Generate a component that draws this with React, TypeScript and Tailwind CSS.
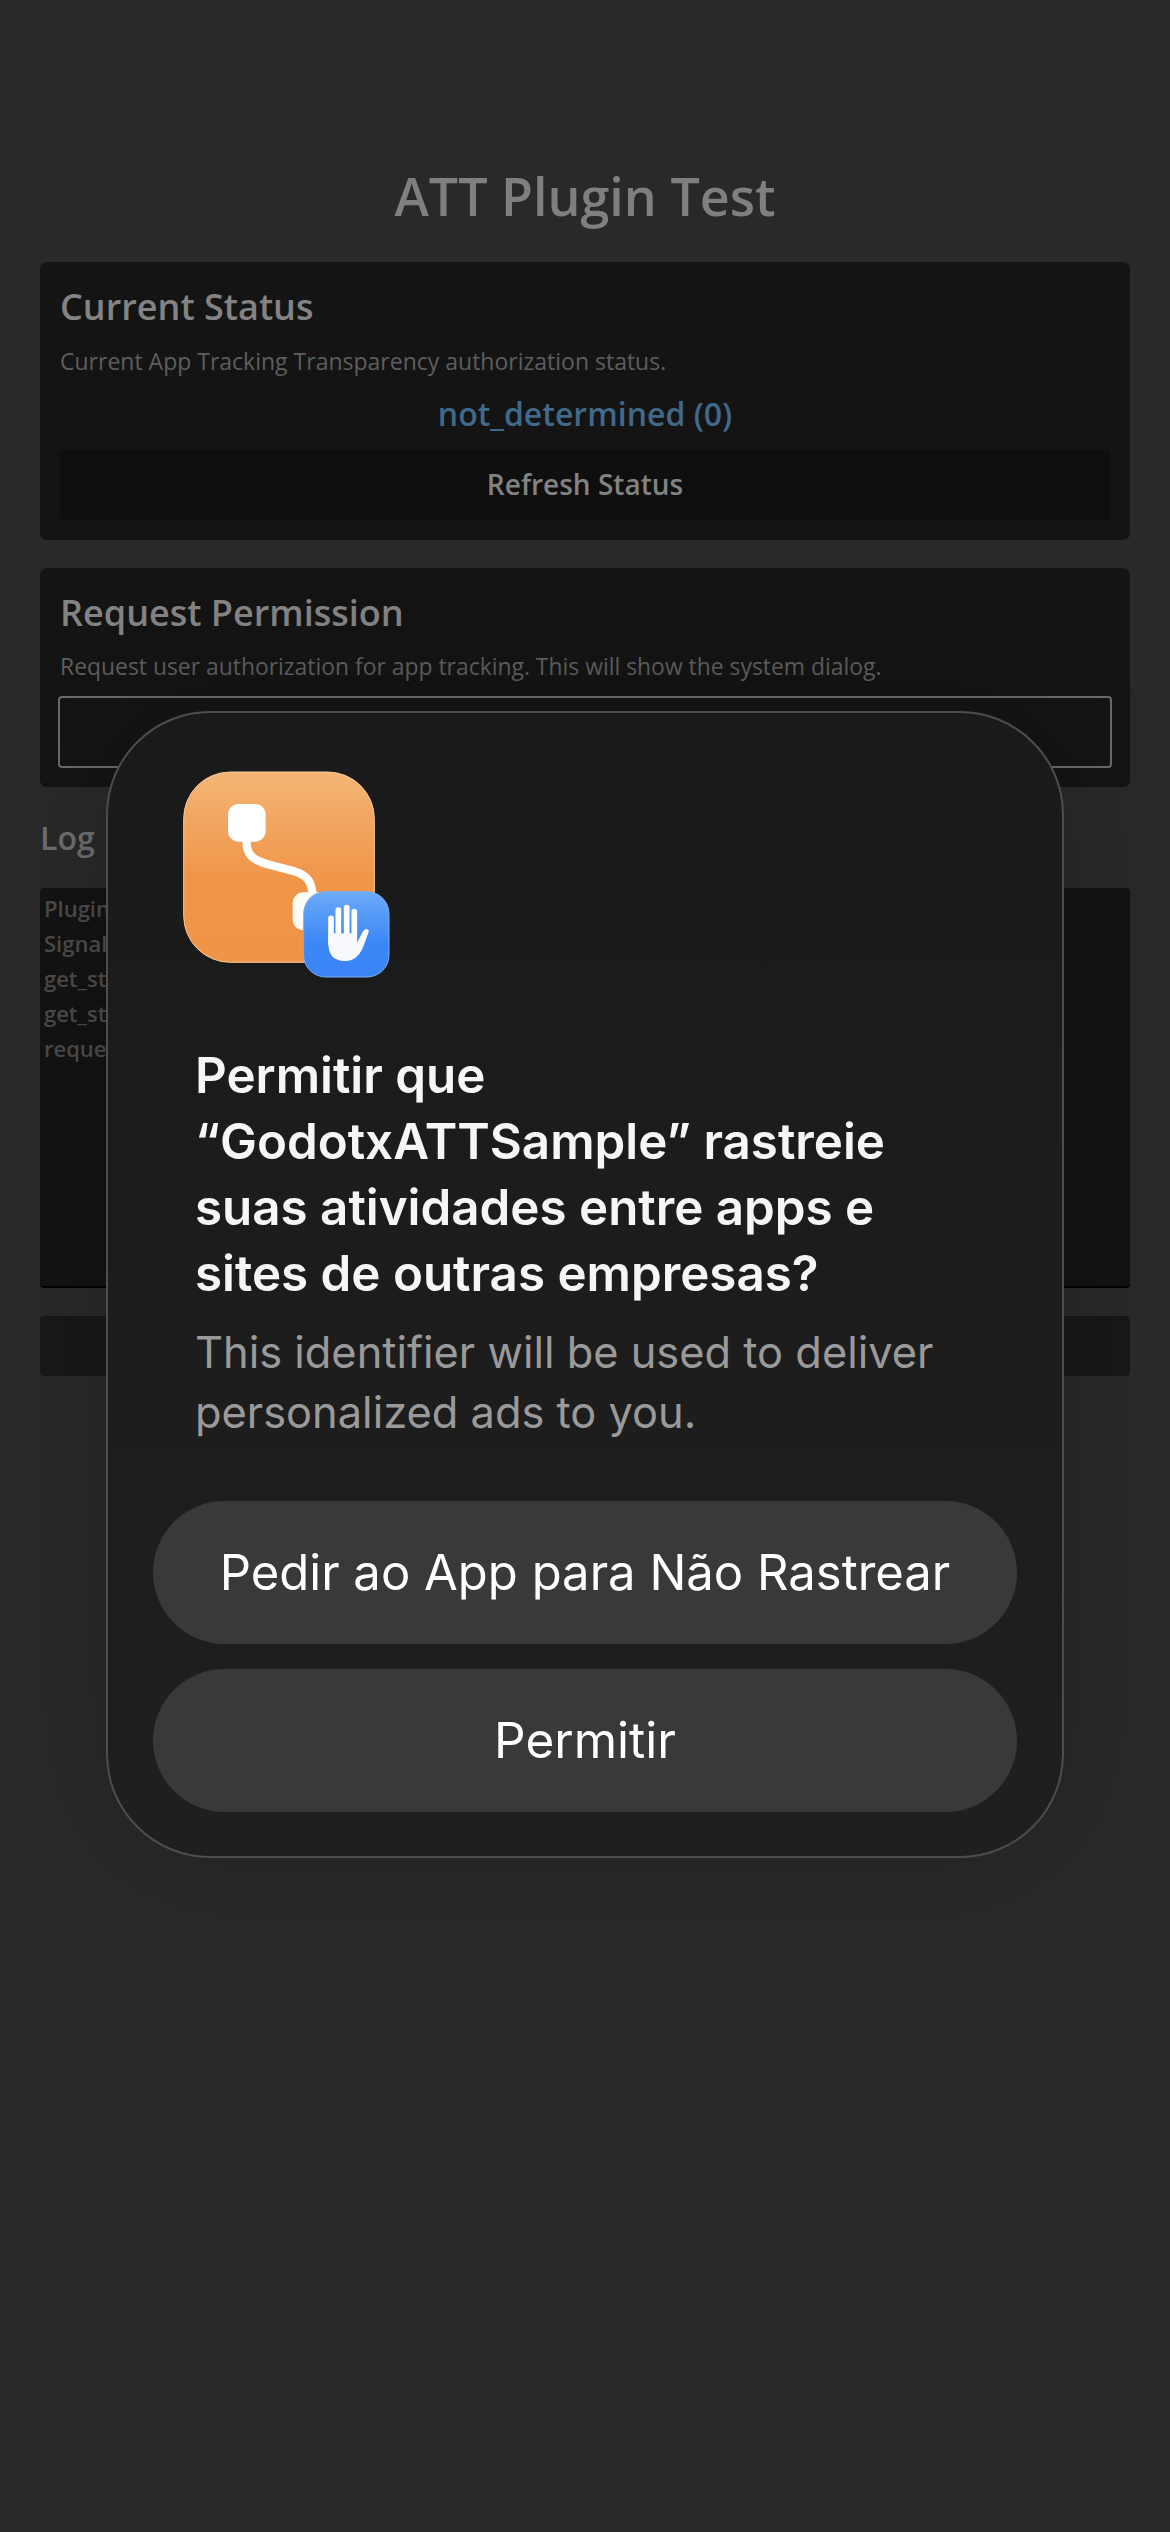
export default function App() {
  const logLines = ["Plugin ready", "Signals connected", "get_status: 0", "get_status_string: ok", "request_auth: pending"];
  return (
    <div className="relative w-[1170px] h-[2532px] overflow-hidden bg-[#292929] font-['Open_Sans',sans-serif]">
      <div className="flex flex-col px-10 pt-[160px]">
        <h1 className="h-[72px] leading-[72px] text-center text-[52px] font-semibold text-[#7f7f7f]">ATT Plugin Test</h1>

        <section className="mt-[30px] h-[278px] rounded-[7px] bg-[#141414] px-5 pt-[21px]">
          <h2 className="h-12 leading-[48px] text-[36px] font-semibold text-[#838383]">Current Status</h2>
          <p className="mt-[13px] h-[34px] leading-[34px] text-[23px] text-[#5e5e5e]">Current App Tracking Transparency authorization status.</p>
          <p className="mt-[14px] h-[44px] leading-[44px] text-center text-[32px] font-semibold text-[#41698a]">not_determined (0)</p>
          <div className="mt-[14px] flex h-[70px] items-center justify-center rounded-[4px] bg-[#0f0f0f] pb-0.5 text-[28px] font-semibold text-[#828282]">Refresh Status</div>
        </section>

        <section className="mt-7 h-[219px] rounded-[7px] bg-[#141414] px-5 pt-[21px]">
          <h2 className="h-12 leading-[48px] text-[36px] font-semibold text-[#838383]">Request Permission</h2>
          <p className="mt-[13px] h-[34px] leading-[34px] text-[22.9px] text-[#5e5e5e]">Request user authorization for app tracking. This will show the system dialog.</p>
          <div className="mt-3 -mx-0.5 h-[72px] rounded-[4px] border-2 border-[#6a6a6a]" />
        </section>

        <h2 className="mt-[27px] h-12 leading-[48px] text-[32px] font-semibold text-[#6e6e6e]">Log</h2>
        <div className="mt-[26px] h-[400px] rounded-[4px] border-b-2 border-[#000000] bg-[#131313] px-[4px] pt-[3px]">
          {logLines.map((line) => (
            <div key={line} className="h-[35px] leading-[35px] text-[22px] font-semibold text-[#4b4b4b]">{line}</div>
          ))}
        </div>
        <div className="mt-[28px] h-[60px] rounded-[4px] bg-[#181818]" />
      </div>

      <div className="absolute left-[106px] top-[711px] h-[1147px] w-[958px] rounded-[104px] border-2 border-[#4d4d4d] bg-gradient-to-b from-[#1a1a1a] to-[#1f1f1f] shadow-[0_0_120px_rgba(0,0,0,0.18)] font-['Inter',sans-serif]">
        <div className="ml-[42px] mt-[27px] h-[260px] w-[270px]">
          <svg viewBox="0 0 810 780" width="270" height="260">
            <defs>
              <linearGradient id="orange" x1="0" y1="0" x2="0" y2="1">
                <stop offset="0" stopColor="#f3b576" />
                <stop offset="0.55" stopColor="#f09649" />
                <stop offset="1" stopColor="#f09547" />
              </linearGradient>
              <linearGradient id="blue" x1="0" y1="0" x2="0" y2="1">
                <stop offset="0" stopColor="#6cabf9" />
                <stop offset="0.6" stopColor="#3c87f6" />
                <stop offset="1" stopColor="#3a84f5" />
              </linearGradient>
            </defs>
            <rect x="101" y="96" width="572" height="571" rx="140" fill="url(#orange)" stroke="#f7c999" strokeWidth="3" />
            <path d="M290 295 C286 345 310 360 350 372 L430 393 C472 405 488 425 488 475" fill="none" stroke="#ffffff" strokeWidth="25" />
            <rect x="234" y="192" width="113" height="113" rx="32" fill="#ffffff" />
            <rect x="428" y="457" width="113" height="113" rx="32" fill="#fffdf3" />
            <rect x="461" y="455" width="256" height="256" rx="66" fill="url(#blue)" stroke="#76aef6" strokeWidth="3" />
            <g stroke="#ffffff" strokeWidth="17" strokeLinecap="round">
              <line x1="543" y1="535" x2="543" y2="610" />
              <line x1="565" y1="510" x2="565" y2="600" />
              <line x1="590" y1="503" x2="590" y2="600" />
              <line x1="613" y1="515" x2="613" y2="610" />
            </g>
            <path d="M535 580 L621 580 L621 608 L638 575 Q648 560 657 572 L640 620 Q622 663 585 663 Q535 663 535 610 Z" fill="#f8fafd" />
          </svg>
        </div>

        <div className="ml-[87px] mt-[42px] w-[800px] text-[49.3px] font-semibold leading-[66px] text-[#f6f6f6]">
          <div>Permitir que</div>
          <div>“GodotxATTSample” rastreie</div>
          <div>suas atividades entre apps e</div>
          <div>sites de outras empresas?</div>
        </div>
        <div className="ml-[87px] mt-[16px] w-[800px] text-[43.4px] leading-[60px] text-[#9a9a9a]">
          <div>This identifier will be used to deliver</div>
          <div>personalized ads to you.</div>
        </div>

        <div className="mx-[45px] mt-[59px] flex flex-col gap-[25px]">
          <div className="flex h-[143px] items-center justify-center rounded-full bg-[#393939] text-[49px] text-white">Pedir ao App para Não Rastrear</div>
          <div className="flex h-[143px] items-center justify-center rounded-full bg-[#393939] text-[49.5px] text-white">Permitir</div>
        </div>
      </div>
    </div>
  );
}
